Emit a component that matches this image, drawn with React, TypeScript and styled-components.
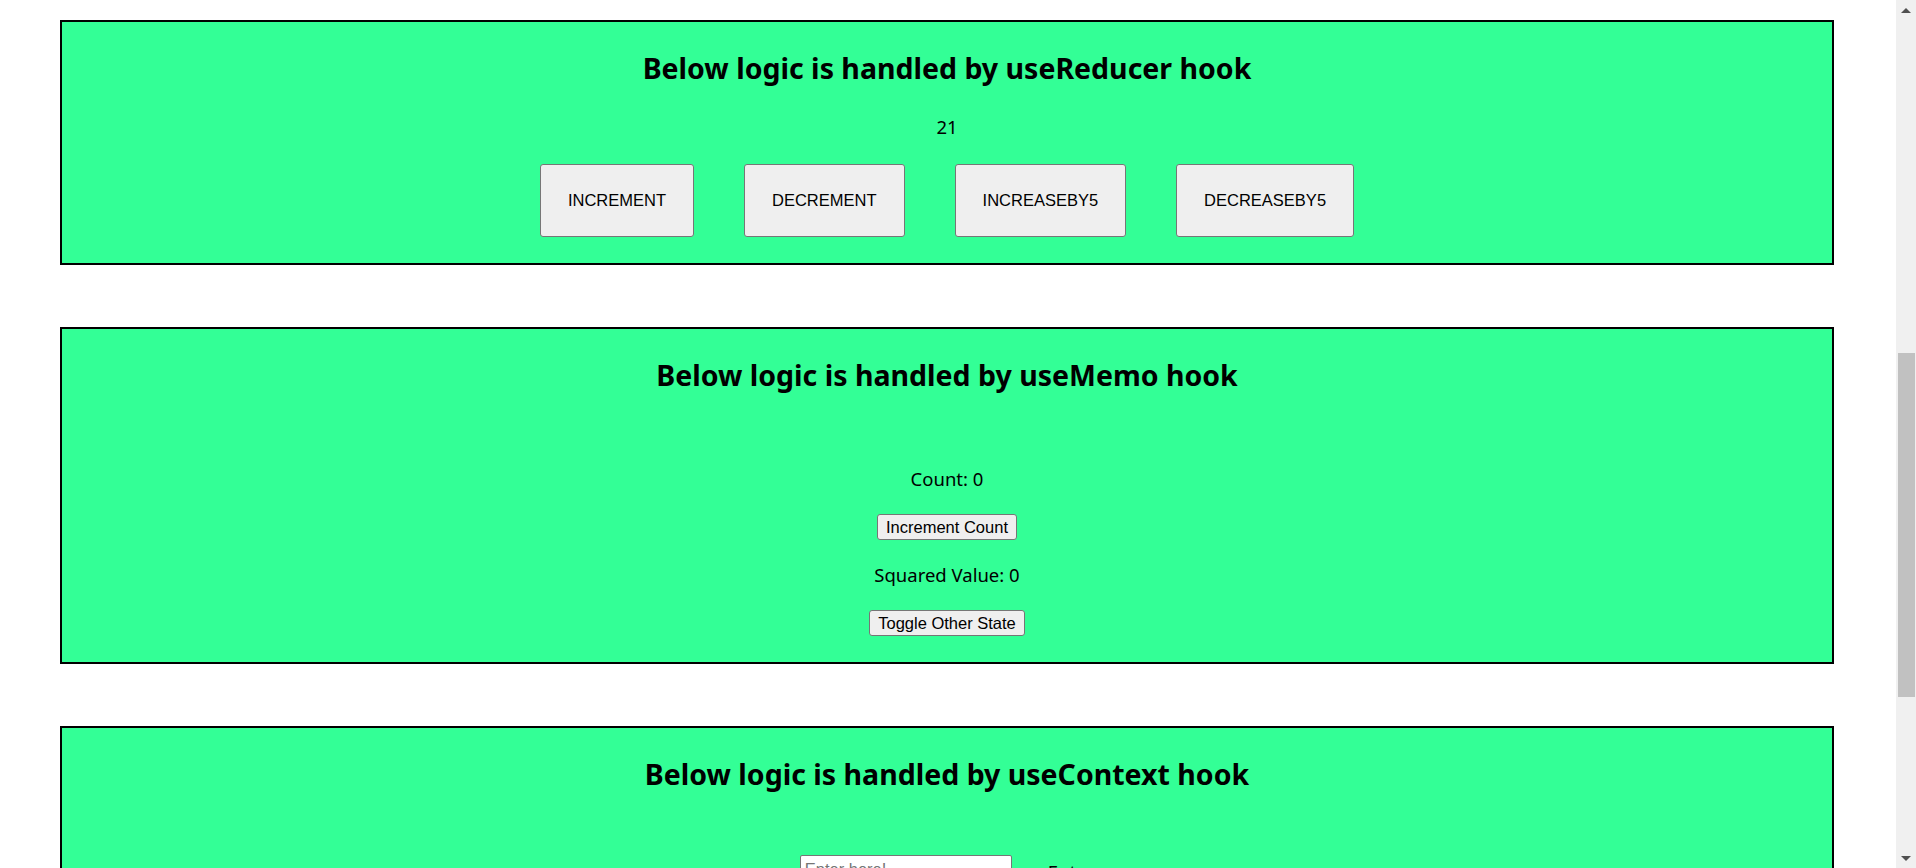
import React, { useState, useMemo, useReducer } from "react";
import styled, { createGlobalStyle } from "styled-components";

const GlobalStyle = createGlobalStyle`
  html, body {
    margin: 0;
    padding: 0;
    height: 868px;
    overflow: hidden;
    background: #ffffff;
  }
  body {
    font-family: "Noto Sans", "Open Sans", sans-serif;
    color: #000;
  }
`;

const Screen = styled.div`
  display: flex;
  width: 1916px;
  height: 868px;
`;

const Page = styled.main`
  flex: 1;
  display: flex;
  flex-direction: column;
  gap: 62px;
  padding: 20px 62px 0 60px;
  overflow: hidden;
`;

const Section = styled.section<{ $tall?: boolean }>`
  display: flex;
  flex-direction: column;
  align-items: center;
  background: #33ff96;
  border: 2px solid #000;
  padding-bottom: 26px;
  ${(p) => (p.$tall ? "min-height: 400px;" : "")}
`;

const Heading = styled.h2`
  margin: 26px 0 0;
  font-family: "Noto Sans", "Open Sans", sans-serif;
  font-weight: 700;
  font-size: 28.5px;
  line-height: 40px;
  color: #000;
`;

const Text = styled.p<{ $top: number }>`
  margin: ${(p) => p.$top}px 0 0;
  font-size: 18.5px;
  line-height: 26px;
`;

const ButtonRow = styled.div`
  display: flex;
  gap: 50px;
  margin-top: 24px;
`;

const BigButton = styled.button`
  font-family: "Liberation Sans", Arial, sans-serif;
  font-size: 16.5px;
  line-height: 19px;
  padding: 26px 27px;
  background: #efefef;
  border: 1px solid #767676;
  border-radius: 3px;
  color: #000;
`;

const SmallButton = styled.button<{ $top: number }>`
  margin-top: ${(p) => p.$top}px;
  height: 26px;
  font-family: "Liberation Sans", Arial, sans-serif;
  font-size: 16.5px;
  line-height: 19px;
  padding: 2px 8px;
  background: #efefef;
  border: 1px solid #767676;
  border-radius: 3px;
  color: #000;
`;

const InputRow = styled.div`
  display: flex;
  align-items: flex-start;
  gap: 36px;
  margin-top: 61px;
`;

const TextInput = styled.input`
  width: 212px;
  height: 28px;
  box-sizing: border-box;
  border: 1px solid #767676;
  border-radius: 2px;
  padding: 1px 4px;
  font-family: "Liberation Sans", Arial, sans-serif;
  font-size: 16.5px;
  background: #fff;
  &::placeholder {
    color: #757575;
  }
`;

const Label = styled.span`
  margin-top: 4px;
  font-size: 18.5px;
  line-height: 26px;
`;

const Scrollbar = styled.div`
  width: 20px;
  height: 868px;
  background: #f0f0f0;
  display: flex;
  flex-direction: column;
  align-items: center;
`;

const Arrow = styled.div<{ $down?: boolean }>`
  height: 20px;
  width: 20px;
  display: flex;
  align-items: center;
  justify-content: center;
  &::after {
    content: "";
    width: 0;
    height: 0;
    border-left: 5px solid transparent;
    border-right: 5px solid transparent;
    ${(p) =>
      p.$down
        ? "border-top: 5px solid #505050;"
        : "border-bottom: 5px solid #505050;"}
  }
`;

const Track = styled.div`
  flex: 1;
  width: 100%;
  display: flex;
  flex-direction: column;
  align-items: center;
`;

const Thumb = styled.div`
  margin-top: 333px;
  width: 17px;
  height: 344px;
  background: #c1c1c1;
`;

type Action = "INCREMENT" | "DECREMENT" | "INCREASEBY5" | "DECREASEBY5";

function reducer(state: number, action: Action): number {
  switch (action) {
    case "INCREMENT":
      return state + 1;
    case "DECREMENT":
      return state - 1;
    case "INCREASEBY5":
      return state + 5;
    case "DECREASEBY5":
      return state - 5;
    default:
      return state;
  }
}

export default function App() {
  const [value, dispatch] = useReducer(reducer, 21);
  const [count, setCount] = useState(0);
  const [other, setOther] = useState(false);
  const squared = useMemo(() => count * count, [count]);
  const [text, setText] = useState("");

  const actions: Action[] = ["INCREMENT", "DECREMENT", "INCREASEBY5", "DECREASEBY5"];

  return (
    <>
      <GlobalStyle />
      <Screen>
        <Page>
          <Section>
            <Heading>Below logic is handled by useReducer hook</Heading>
            <Text $top={26}>{value}</Text>
            <ButtonRow>
              {actions.map((a) => (
                <BigButton key={a} onClick={() => dispatch(a)}>
                  {a}
                </BigButton>
              ))}
            </ButtonRow>
          </Section>

          <Section>
            <Heading>Below logic is handled by useMemo hook</Heading>
            <Text $top={71}>Count: {count}</Text>
            <SmallButton $top={22} onClick={() => setCount((c) => c + 1)}>
              Increment Count
            </SmallButton>
            <Text $top={22}>Squared Value: {squared}</Text>
            <SmallButton $top={22} onClick={() => setOther((o) => !o)}>
              Toggle Other State
            </SmallButton>
          </Section>

          <Section $tall>
            <Heading>Below logic is handled by useContext hook</Heading>
            <InputRow>
              <TextInput
                placeholder="Enter here!"
                value={text}
                onChange={(e) => setText(e.target.value)}
              />
              <Label>Enter</Label>
            </InputRow>
          </Section>
        </Page>
        <Scrollbar>
          <Arrow />
          <Track>
            <Thumb />
          </Track>
          <Arrow $down />
        </Scrollbar>
      </Screen>
    </>
  );
}
